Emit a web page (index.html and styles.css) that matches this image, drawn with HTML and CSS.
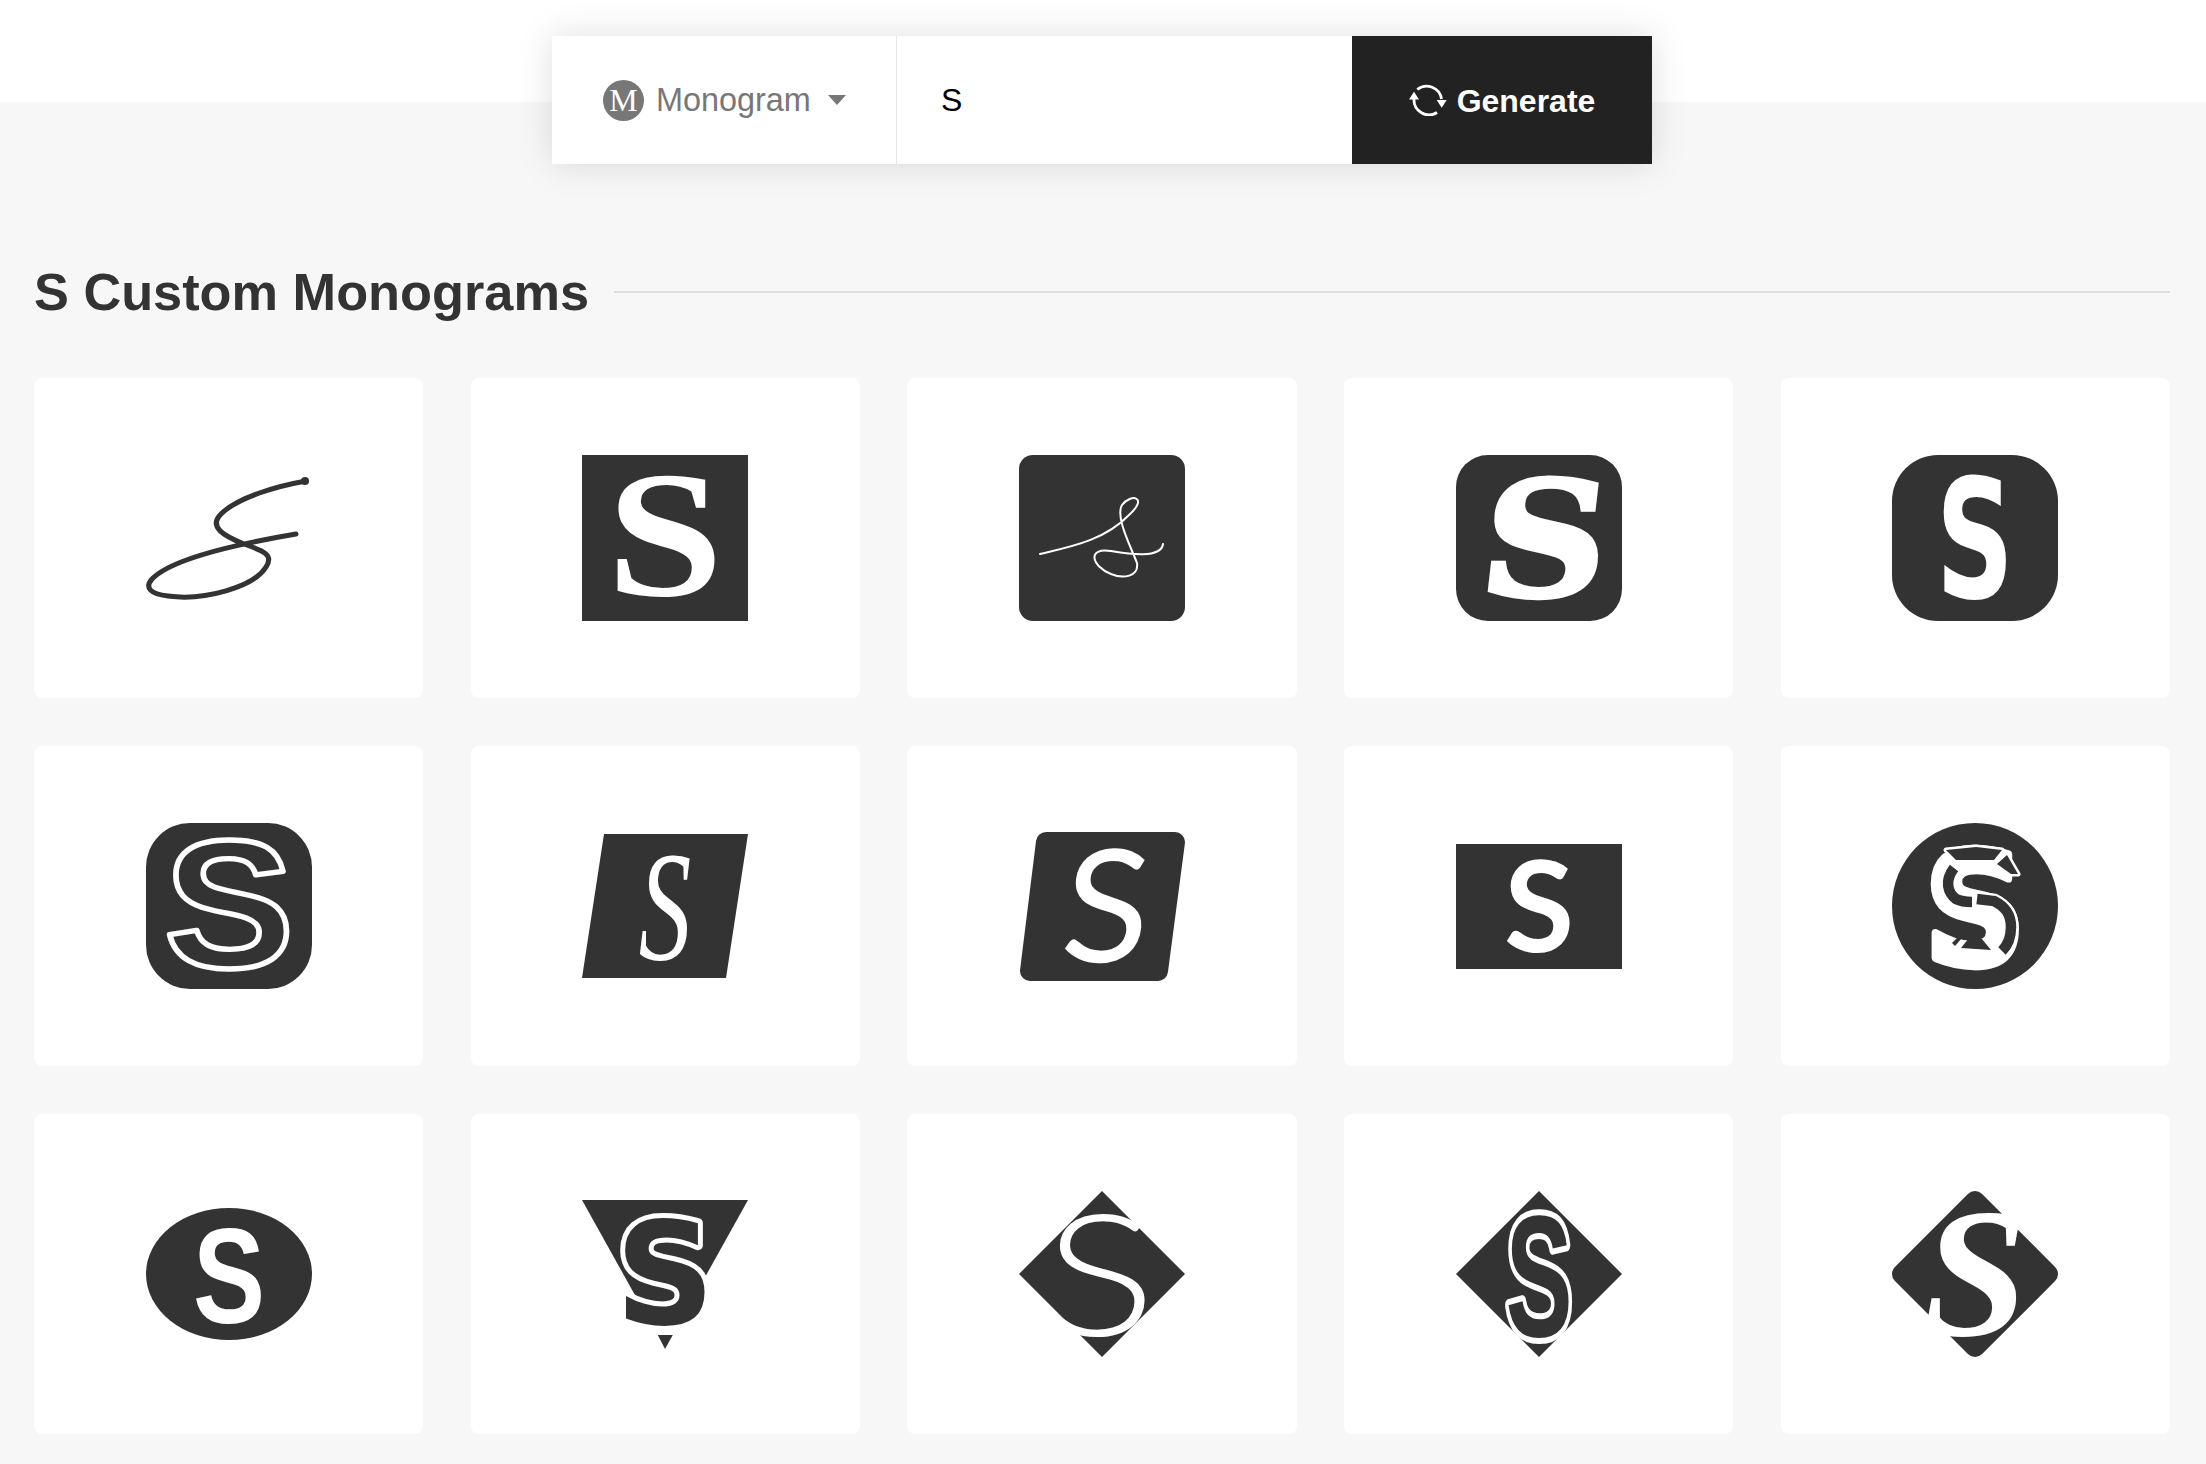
FILE: index.html
```html
<!DOCTYPE html>
<html lang="en">
<head>
<meta charset="utf-8"/>
<title>S Custom Monograms</title>
<link rel="stylesheet" href="styles.css">
</head>
<body>
<header class="topbar">
  <form class="search">
    <div class="type-select">
      <span class="type-icon">M</span>
      <span class="type-label">Monogram</span>
      <span class="caret"></span>
    </div>
    <div class="search-input">S</div>
    <button class="generate" type="button">
      <svg class="refresh" viewBox="0 0 38 32">
        <path d="M8.300 5.500 A15 15 0 0 1 32.500 15"/>
        <path d="M28 28.500 A15 15 0 0 1 5 15"/>
        <path class="solid" d="M5 7.700 L0 15.500 L10 15.500 Z"/>
        <path class="solid" d="M32.700 23.700 L27.700 16 L37.700 16 Z"/>
      </svg>
      <span class="generate-label">Generate</span>
    </button>
  </form>
</header>

<main class="content">
  <div class="section-title">
    <h1>S Custom Monograms</h1>
    <span class="rule"></span>
  </div>

  <div class="grid">
    <div class="card">
      <svg class="logo" viewBox="0 0 166 166">
        <path class="ink-line" d="M160 26 C132 31 92 42 75 59 C62 72 78 81 98 89 C118 96 128 100 120 112 C108 132 58 146 22 141 C3 139 -1 132 6 124 C24 105 85 90 150 79"/>
        <circle class="ink" cx="159" cy="26" r="4"/>
      </svg>
    </div>

    <div class="card">
      <svg class="logo" viewBox="0 0 166 166">
        <rect class="ink" width="166" height="166"/>
        <text class="glyph serif-bold" transform="translate(83 140) scale(2.100 1.800)">S</text>
      </svg>
    </div>

    <div class="card">
      <svg class="logo" viewBox="0 0 166 166">
        <rect class="ink" width="166" height="166" rx="14"/>
        <path class="white-line" d="M21 99 C50 92 85 86 110 60 C130 42 112 38 103 50 C96 62 112 92 118 108 C120 122 104 124 92 119 C72 111 68 92 92 96 C110 99 142 104 144 89"/>
      </svg>
    </div>

    <div class="card">
      <svg class="logo" viewBox="0 0 166 166">
        <rect class="ink" width="166" height="166" rx="32"/>
        <text class="glyph slab-bold thick" transform="translate(83 141) scale(1.750 1.600) skewX(-6)">S</text>
      </svg>
    </div>

    <div class="card">
      <svg class="logo" viewBox="0 0 166 166">
        <rect class="ink" width="166" height="166" rx="46"/>
        <text class="glyph sans-heavy" transform="translate(83 143) scale(1.080 1.650)">S</text>
      </svg>
    </div>

    <div class="card">
      <svg class="logo" viewBox="0 0 166 166">
        <rect class="ink" width="166" height="166" rx="44"/>
        <text class="glyph outline" transform="translate(83 144) scale(1.950 1.820)">S</text>
      </svg>
    </div>

    <div class="card">
      <svg class="logo" viewBox="0 0 166 166">
        <polygon class="ink" points="22,11 166,11 144,155 0,155"/>
        <text class="glyph serif-italic" transform="translate(83 136) scale(1.050 1.560)">S</text>
      </svg>
    </div>

    <div class="card">
      <svg class="logo" viewBox="0 0 166 166">
        <polygon class="ink rounded" points="27,19 156,19 139,148 11,148"/>
        <text class="glyph flare" transform="translate(83 139) scale(1.600 1.570) skewX(-5)">S</text>
      </svg>
    </div>

    <div class="card">
      <svg class="logo" viewBox="0 0 166 166">
        <rect class="ink" y="21" width="166" height="125"/>
        <text class="glyph flare-bold" transform="translate(83 129) scale(1.280 1.260)">S</text>
      </svg>
    </div>

    <div class="card">
      <svg class="logo" viewBox="0 0 166 166">
        <circle class="ink" cx="83" cy="83" r="83"/>
        <text class="glyph sans-heavy thicker" transform="translate(83 141) scale(1.400 1.550)">S</text>
        <polygon class="cut-under" points="54,27 84,24 110,27 115,32 126,51 119,51 105,41 102,37 64,37"/>
        <path class="cut-under-line" d="M85 76 L102 78 C114 84 119 92 119 104 C119 114 116 122 110 128"/>
        <polygon class="ink" points="54,27 64,37 102,37 110,27 84,24"/>
        <polygon class="ink" points="115,32 126,51 119,51 105,41"/>
        <path class="cut-line" d="M62 45 C52 58 56 70 64 76 C70 79 75 79 80 79"/>
        <path class="cut-line" d="M85 76 L102 78 C114 84 119 92 119 104 C119 114 116 122 110 128"/>
        <polygon class="ink" points="69,125 77,115 90,116 99,127"/>
        <polygon class="ink" points="60,120 68,112 70,115 63,123"/>
      </svg>
    </div>

    <div class="card">
      <svg class="logo" viewBox="0 0 166 166">
        <ellipse class="ink" cx="83" cy="83" rx="83" ry="66"/>
        <text class="glyph sans-bold" transform="translate(83 132) scale(1.080 1.350)">S</text>
      </svg>
    </div>

    <div class="card">
      <svg class="logo" viewBox="0 0 166 166">
        <polygon class="ink" points="0,9 166,9 98.600,130 67.400,130"/>
        <polygon class="ink" points="75.800,144 90.800,144 83,158"/>
        <text class="glyph ringed" transform="translate(83 133) scale(1.380 1.420)">S</text>
      </svg>
    </div>

    <div class="card">
      <svg class="logo" viewBox="0 0 166 166">
        <polygon class="ink" points="83,0 166,83 83,166 0,83"/>
        <text class="glyph flare-light" transform="translate(81 145) scale(2.100 1.690)">S</text>
      </svg>
    </div>

    <div class="card">
      <svg class="logo" viewBox="0 0 166 166">
        <polygon class="ink" points="83,0 166,83 83,166 0,83"/>
        <text class="glyph ringed ringed-narrow" transform="translate(83 145) scale(1.000 1.720)">S</text>
      </svg>
    </div>

    <div class="card">
      <svg class="logo" viewBox="0 0 166 166">
        <polygon class="ink rounded" points="83,10 156,83 83,156 10,83"/>
        <text class="glyph serif-swash" transform="translate(83 144) scale(1.900 1.850)">S</text>
      </svg>
    </div>
  </div>
</main>
</body>
</html>
```

FILE: styles.css
```css
* {
  box-sizing: border-box;
}
body {
  margin: 0;
  background-color: #f7f7f7;
  color: #333333;
  font-family: "Liberation Sans", Arial, sans-serif;
}

.topbar {
  height: 102px;
  background-color: #ffffff;
  display: flex;
  justify-content: center;
}
.search {
  display: flex;
  width: 1100px;
  height: 128px;
  margin: 36px 0 0 -2px;
  background: #ffffff;
  box-shadow: 0 0 34px rgba(0,0,0,0.13);
}
.type-select {
  width: 345px;
  padding-left: 51px;
  display: flex;
  align-items: center;
  border-right: 1px solid #e6e6e6;
  color: #777777;
  font-size: 32.400px;
}
.type-icon {
  width: 41px;
  height: 41px;
  border-radius: 50%;
  background: #777777;
  color: #ffffff;
  font-family: "Liberation Serif", serif;
  font-size: 32px;
  line-height: 41px;
  text-align: center;
  margin-right: 12px;
}
.caret {
  width: 0;
  height: 0;
  margin-left: 17px;
  border-left: 9px solid transparent;
  border-right: 9px solid transparent;
  border-top: 10px solid #777777;
}
.search-input {
  flex: 1;
  padding-left: 44px;
  display: flex;
  align-items: center;
  color: #000000;
  font-size: 32px;
}
.generate {
  width: 300px;
  border: none;
  background-color: #222222;
  color: #ffffff;
  font-family: inherit;
  font-size: 32px;
  font-weight: bold;
  display: flex;
  align-items: center;
  justify-content: center;
  gap: 10px;
}
.generate-label {
  padding-top: 2px;
}
.refresh {
  width: 38px;
  height: 32px;
}
.refresh path {
  fill: none;
  stroke: #ffffff;
  stroke-width: 2.800;
}
.refresh .solid {
  fill: #ffffff;
  stroke: none;
}

.content {
  padding: 0 36px 30px 34px;
}
.section-title {
  display: flex;
  align-items: center;
  gap: 25px;
  margin-top: 150px;
  height: 80px;
}
.section-title h1 {
  margin: 0;
  font-size: 52.300px;
  font-weight: bold;
  color: #333333;
}
.rule {
  flex: 1;
  height: 2px;
  background: #dddddd;
}
.grid {
  display: grid;
  grid-template-columns: repeat(5, 1fr);
  gap: 48px 47.500px;
  margin-top: 46px;
}
.card {
  height: 320px;
  background: #ffffff;
  border-radius: 8px;
  display: flex;
  align-items: center;
  justify-content: center;
}
.logo {
  width: 166px;
  height: 166px;
  overflow: visible;
}

.ink {
  fill: #333333;
}
.rounded {
  stroke: #333333;
  stroke-width: 20;
  stroke-linejoin: round;
}
.ink-line {
  fill: none;
  stroke: #333333;
  stroke-width: 5;
  stroke-linecap: round;
}
.white-line {
  fill: none;
  stroke: #ffffff;
  stroke-width: 2;
  stroke-linecap: round;
}
.cut-line {
  fill: none;
  stroke: #333333;
  stroke-width: 10.500;
}
.cut-under {
  fill: #ffffff;
  stroke: #ffffff;
  stroke-width: 5;
  stroke-linejoin: round;
}
.cut-under-line {
  fill: none;
  stroke: #ffffff;
  stroke-width: 15;
}

.glyph {
  font-size: 100px;
  text-anchor: middle;
  fill: #ffffff;
}
.serif-bold {
  font-family: "Liberation Serif", serif;
  font-weight: bold;
}
.slab-bold {
  font-family: "DejaVu Serif", serif;
  font-weight: bold;
}
.thick {
  stroke: #ffffff;
  stroke-width: 4px;
  vector-effect: non-scaling-stroke;
}
.thicker {
  stroke: #ffffff;
  stroke-width: 8px;
  stroke-linejoin: round;
  vector-effect: non-scaling-stroke;
}
.sans-heavy {
  font-family: "DejaVu Sans", sans-serif;
  font-weight: bold;
}
.sans-bold {
  font-family: "Liberation Sans", sans-serif;
  font-weight: bold;
}
.serif-italic {
  font-family: "Liberation Serif", serif;
  font-style: italic;
}
.serif-swash {
  font-family: "Liberation Serif", serif;
  font-style: italic;
  font-weight: bold;
}
.flare {
  font-family: "Lato", sans-serif;
}
.flare-light {
  font-family: "Lato", sans-serif;
  font-weight: 300;
}
.flare-bold {
  font-family: "Lato", sans-serif;
  font-weight: bold;
}
.outline {
  font-family: "Liberation Sans", sans-serif;
  font-weight: bold;
  fill: #333333;
  stroke: #ffffff;
  stroke-width: 5.500px;
  stroke-linejoin: round;
  vector-effect: non-scaling-stroke;
}
.ringed {
  font-family: "DejaVu Sans", sans-serif;
  font-weight: bold;
  fill: #333333;
  stroke: #ffffff;
  stroke-width: 10px;
  stroke-linejoin: round;
  paint-order: stroke;
  vector-effect: non-scaling-stroke;
}
.ringed-narrow {
  font-family: "Liberation Sans", sans-serif;
}
```
